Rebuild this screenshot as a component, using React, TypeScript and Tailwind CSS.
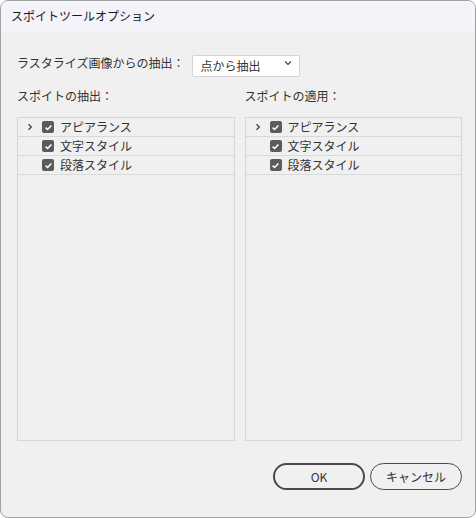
import { useState } from 'react';

type Item = { label: string; expandable?: boolean; checked: boolean };

const initialItems: Item[] = [
  { label: 'アピアランス', expandable: true, checked: true },
  { label: '文字スタイル', checked: true },
  { label: '段落スタイル', checked: true },
];

const Check = ({ checked, onClick }: { checked: boolean; onClick: () => void }) => (
  <button
    type="button"
    onClick={onClick}
    className="w-[12px] h-[12px] rounded-[2px] bg-[#5b5b5b] flex items-center justify-center shrink-0"
  >
    {checked && (
      <svg width="9" height="9" viewBox="0 0 9 9">
        <path d="M1.6 4.6 L3.6 6.5 L7.4 2.4" fill="none" stroke="#fff" strokeWidth="1.5" />
      </svg>
    )}
  </button>
);

const ItemPanel = ({ title }: { title: string }) => {
  const [items, setItems] = useState(initialItems);

  const toggle = (i: number) =>
    setItems(items.map((it, idx) => (idx === i ? { ...it, checked: !it.checked } : it)));

  return (
    <div className="flex flex-col flex-1">
      <div className="h-[24px] flex items-center text-[12px] text-[#333]">{title}</div>
      <div className="mt-[9px] h-[324px] border border-[#d6d6d6] bg-[#f0f0f0]">
        {items.map((it, i) => (
          <div key={it.label} className="h-[19px] flex items-center border-b border-[#d9d9d9]">
            <div className="w-[24px] flex justify-center">
              {it.expandable && (
                <svg width="8" height="8" viewBox="0 0 8 8">
                  <path d="M2.5 1.2 L5.3 4 L2.5 6.8" fill="none" stroke="#444" strokeWidth="1.3" />
                </svg>
              )}
            </div>
            <Check checked={it.checked} onClick={() => toggle(i)} />
            <span className="ml-[6px] text-[12px] text-[#333] leading-none">{it.label}</span>
          </div>
        ))}
      </div>
    </div>
  );
};

export default function App() {
  const [mode, setMode] = useState('point');

  return (
    <div
      className="w-[476px] h-[518px] bg-[#f0f0f0] border border-[#a3a3a3] rounded-[8px] overflow-hidden flex flex-col"
      style={{ fontFamily: '"Noto Sans CJK JP", "Noto Sans", sans-serif' }}
    >
      {/* title bar */}
      <div className="h-[30px] bg-[#f3f3f9] flex items-center pl-[10px] text-[12px] text-[#1a1a1a]">
        スポイトツールオプション
      </div>

      <div className="flex flex-col pl-[16px] pr-[13px] flex-1">
        {/* raster extraction */}
        <div className="mt-[21px] h-[22px] flex items-center gap-[8px]">
          <span className="text-[12px] text-[#333]">ラスタライズ画像からの抽出：</span>
          <div className="relative w-[108px] h-[22px]">
            <select
              value={mode}
              onChange={(e) => setMode(e.target.value)}
              className="appearance-none w-full h-full bg-white border border-[#d4d4d4] rounded-[2px] pl-[7px] text-[12px] text-[#333] outline-none"
            >
              <option value="point">点から抽出</option>
              <option value="area">領域から抽出</option>
            </select>
            <svg
              className="absolute right-[8px] top-[8px] pointer-events-none"
              width="8"
              height="6"
              viewBox="0 0 8 6"
            >
              <path d="M1 1.5 L4 4.5 L7 1.5" fill="none" stroke="#444" strokeWidth="1.2" />
            </svg>
          </div>
        </div>

        {/* panels */}
        <div className="mt-[10px] flex gap-[10px]">
          <ItemPanel title="スポイトの抽出：" />
          <ItemPanel title="スポイトの適用：" />
        </div>

        {/* actions */}
        <div className="mt-[22px] flex justify-end gap-[5px]">
          <button
            type="button"
            className="w-[92px] h-[27px] rounded-full border-2 border-[#4a4a4a] text-[12px] text-[#333] flex items-center justify-center"
          >
            OK
          </button>
          <button
            type="button"
            className="w-[92px] h-[27px] rounded-full border border-[#4a4a4a] text-[12px] text-[#333] flex items-center justify-center"
          >
            キャンセル
          </button>
        </div>
      </div>
    </div>
  );
}
